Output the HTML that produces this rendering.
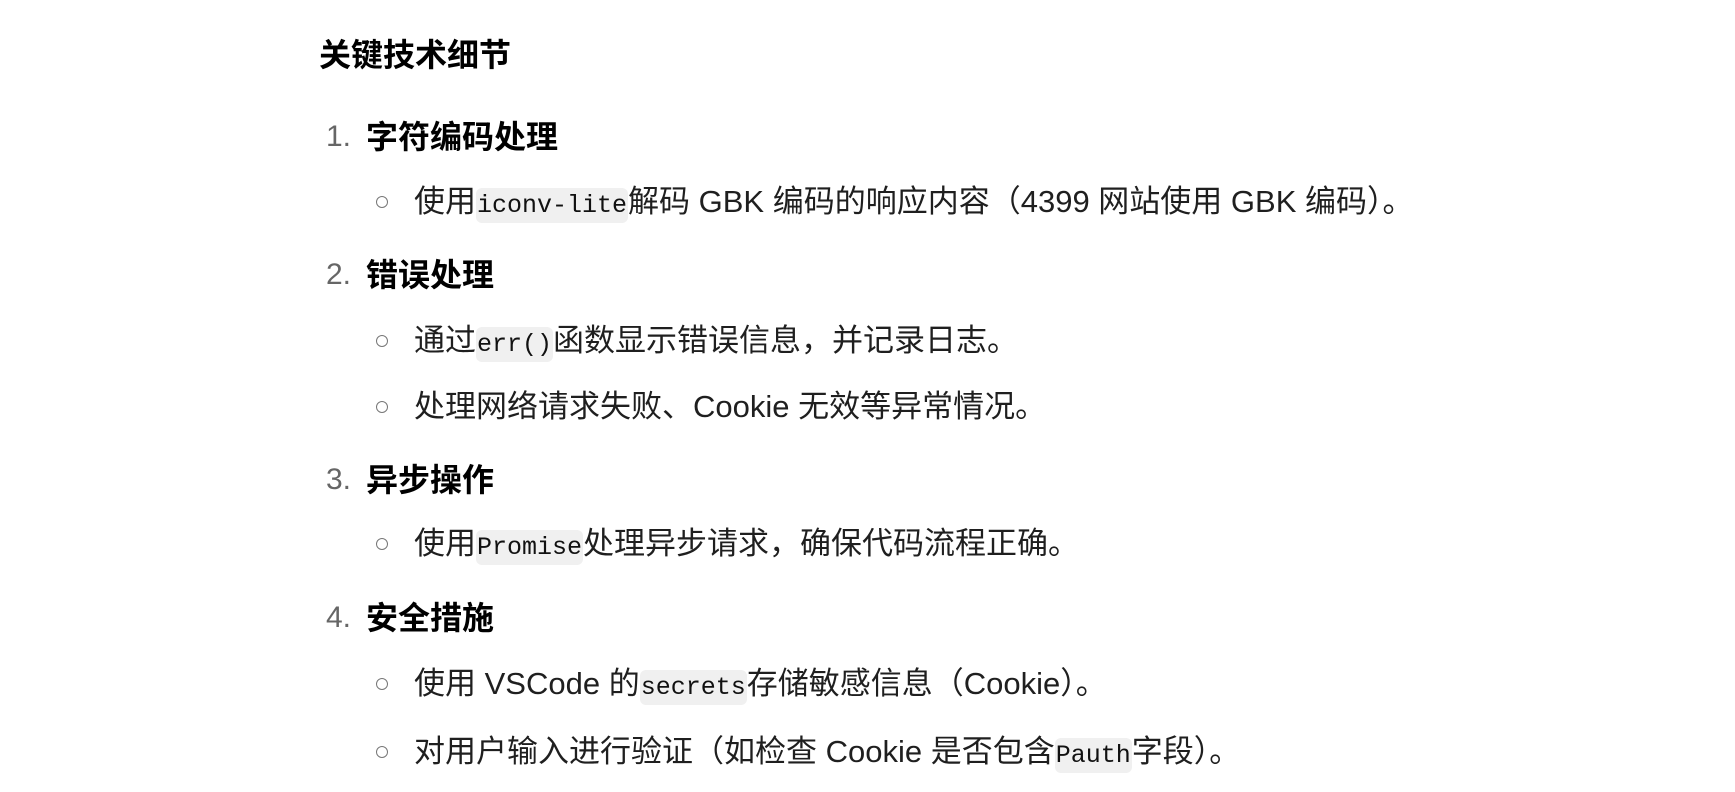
<!DOCTYPE html>
<html><head><meta charset="utf-8"><style>
body{margin:0;width:1735px;height:792px;background:#fff;overflow:hidden;font-family:"Liberation Sans","Noto Sans CJK SC",sans-serif;color:#1f1f1f}
.l{position:absolute;white-space:nowrap;font-size:31px;line-height:40px}
.h{font-weight:bold;color:#000;font-size:32px}
.n{position:absolute;color:#666;font-size:30px;line-height:40px}
.b{position:absolute;width:10px;height:10px;border:1.5px solid #777;border-radius:50%}
code{font-family:"Liberation Mono","DejaVu Sans Mono",monospace;font-size:25px;background:#f0f0f0;border-radius:6px;padding:3px 1px;color:#111}
</style></head><body>
<div class="l h" style="left:319px;top:35px">关键技术细节</div>

<div class="n" style="left:326px;top:117px">1.</div>
<div class="l h" style="left:366px;top:117px">字符编码处理</div>
<div class="b" style="left:376px;top:196px"></div>
<div class="l" style="left:414px;top:182px">使用<code>iconv-lite</code>解码 GBK 编码的响应内容（4399 网站使用 GBK 编码）。</div>

<div class="n" style="left:326px;top:255px">2.</div>
<div class="l h" style="left:366px;top:255px">错误处理</div>
<div class="b" style="left:376px;top:335px"></div>
<div class="l" style="left:414px;top:321px">通过<code>err()</code>函数显示错误信息，并记录日志。</div>
<div class="b" style="left:376px;top:401px"></div>
<div class="l" style="left:414px;top:387px">处理网络请求失败、Cookie 无效等异常情况。</div>

<div class="n" style="left:326px;top:460px">3.</div>
<div class="l h" style="left:366px;top:460px">异步操作</div>
<div class="b" style="left:376px;top:538px"></div>
<div class="l" style="left:414px;top:524px">使用<code>Promise</code>处理异步请求，确保代码流程正确。</div>

<div class="n" style="left:326px;top:598px">4.</div>
<div class="l h" style="left:366px;top:598px">安全措施</div>
<div class="b" style="left:376px;top:678px"></div>
<div class="l" style="left:414px;top:664px">使用 VSCode 的<code>secrets</code>存储敏感信息（Cookie）。</div>
<div class="b" style="left:376px;top:746px"></div>
<div class="l" style="left:414px;top:732px">对用户输入进行验证（如检查 Cookie 是否包含<code>Pauth</code>字段）。</div>
</body></html>
